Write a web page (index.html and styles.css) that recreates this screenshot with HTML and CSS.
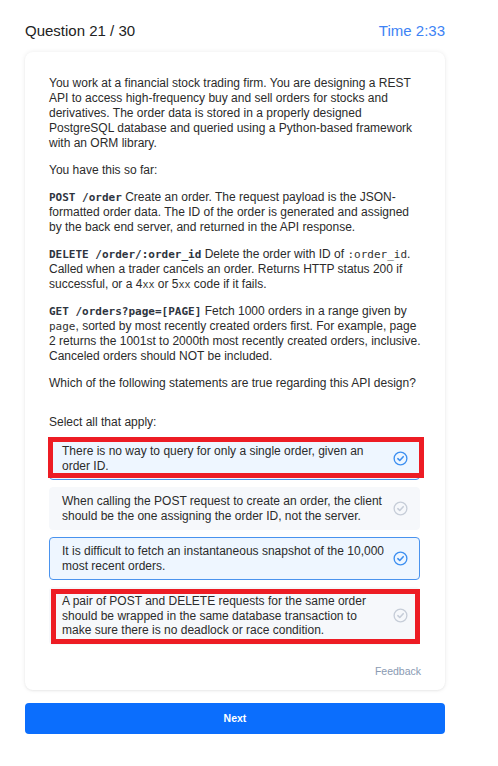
FILE: index.html
```html
<!DOCTYPE html>
<html>
<head>
<meta charset="utf-8">
<link rel="stylesheet" href="styles.css">
</head>
<body>
<div class="page">
  <header class="top">
    <span class="qnum">Question 21 / 30</span>
    <span class="timer">Time 2:33</span>
  </header>
  <section class="card">
    <div class="question">
      <p>You work at a financial stock trading firm. You are designing a REST API to access high-frequency buy and sell orders for stocks and derivatives. The order data is stored in a properly designed PostgreSQL database and queried using a Python-based framework with an ORM library.</p>
      <p>You have this so far:</p>
      <p><code class="ep">POST /order</code> Create an order. The request payload is the JSON-formatted order data. The ID of the order is generated and assigned by the back end server, and returned in the API response.</p>
      <p><code class="ep">DELETE /order/:order_id</code> Delete the order with ID of <code>:order_id</code>. Called when a trader cancels an order. Returns HTTP status 200 if successful, or a 4<code class="xx">xx</code> or 5<code class="xx">xx</code> code if it fails.</p>
      <p><code class="ep">GET /orders?page=[PAGE]</code> Fetch 1000 orders in a range given by <code>page</code>, sorted by most recently created orders first. For example, page 2 returns the 1001st to 2000th most recently created orders, inclusive. Canceled orders should NOT be included.</p>
      <p>Which of the following statements are true regarding this API design?</p>
    </div>
    <div class="select-label">Select all that apply:</div>
    <div class="options">
      <div class="option selected">
        <span class="opt-text">There is no way to query for only a single order, given an order ID.</span>
        <svg class="check" viewBox="0 0 16 16" width="15" height="15"><circle cx="8" cy="8" r="6.8" fill="none" stroke="currentColor" stroke-width="1.4"/><path d="M5.2 8.2 L7.2 10.1 L10.9 6.1" fill="none" stroke="currentColor" stroke-width="1.7" stroke-linecap="round" stroke-linejoin="round"/></svg>
        <span class="mark mark-a"></span>
      </div>
      <div class="option">
        <span class="opt-text">When calling the POST request to create an order, the client should be the one assigning the order ID, not the server.</span>
        <svg class="check" viewBox="0 0 16 16" width="15" height="15"><circle cx="8" cy="8" r="6.8" fill="none" stroke="currentColor" stroke-width="1.4"/><path d="M5.2 8.2 L7.2 10.1 L10.9 6.1" fill="none" stroke="currentColor" stroke-width="1.7" stroke-linecap="round" stroke-linejoin="round"/></svg>
      </div>
      <div class="option selected">
        <span class="opt-text">It is difficult to fetch an instantaneous snapshot of the 10,000 most recent orders.</span>
        <svg class="check" viewBox="0 0 16 16" width="15" height="15"><circle cx="8" cy="8" r="6.8" fill="none" stroke="currentColor" stroke-width="1.4"/><path d="M5.2 8.2 L7.2 10.1 L10.9 6.1" fill="none" stroke="currentColor" stroke-width="1.7" stroke-linecap="round" stroke-linejoin="round"/></svg>
      </div>
      <div class="option">
        <span class="opt-text">A pair of POST and DELETE requests for the same order should be wrapped in the same database transaction to make sure there is no deadlock or race condition.</span>
        <svg class="check" viewBox="0 0 16 16" width="15" height="15"><circle cx="8" cy="8" r="6.8" fill="none" stroke="currentColor" stroke-width="1.4"/><path d="M5.2 8.2 L7.2 10.1 L10.9 6.1" fill="none" stroke="currentColor" stroke-width="1.7" stroke-linecap="round" stroke-linejoin="round"/></svg>
        <span class="mark mark-b"></span>
      </div>
    </div>
    <div class="feedback">Feedback</div>
  </section>
  <button class="next">Next</button>
</div>
</body>
</html>
```
FILE: styles.css
```css
* { box-sizing: border-box; }
html, body { margin: 0; padding: 0; background: #fff; }
body {
  font-family: "Liberation Sans", Arial, sans-serif;
  color: #2b2b2b;
  width: 498px;
}
.page {
  padding: 22px 53px 0 25px;
}
.top {
  display: flex;
  justify-content: space-between;
  align-items: center;
  font-size: 15px;
  line-height: 18px;
  height: 18px;
  margin-bottom: 12px;
}
.qnum { color: #222; }
.timer { color: #3d83f5; }
.card {
  width: 420px;
  background: #fff;
  border-radius: 8px;
  box-shadow: 0 0 5px rgba(0, 0, 0, 0.08), 0 1px 2px rgba(0, 0, 0, 0.05);
  padding: 24px 24px 12px 24px;
  font-size: 12px;
  line-height: 15px;
}
.question p { margin: 0 0 12px 0; }
.question p:last-child { margin-bottom: 24px; }
code {
  font-family: "DejaVu Sans Mono", "Liberation Mono", monospace;
  font-size: 11px;
  line-height: 1;
  color: #333;
}
code.ep { font-weight: bold; color: #2e3440; }
code.xx { font-size: 10px; }
.select-label { margin-bottom: 7px; }
.options {
  display: flex;
  flex-direction: column;
  gap: 7px;
  width: 371px;
}
.option {
  position: relative;
  display: flex;
  align-items: center;
  gap: 8px;
  padding: 6px 11px 6px 12px;
  line-height: 14.5px;
  border: 1px solid #f6f8fb;
  background: #f6f8fb;
  border-radius: 4px;
  color: #2b2b2b;
}
.option.selected {
  background: #eef6ff;
  border-color: #4a93ee;
}
.opt-text { flex: 1; }
.check { flex: none; color: #c6cdd8; width: 15px; height: 15px; }
.option.selected .check { color: #3b8ef0; }
.mark {
  position: absolute;
  border: 5px solid #ed1c24;
  pointer-events: none;
}
.mark-a { left: -2px; right: -5px; top: -1px; bottom: 1px; }
.mark-b { left: 1px; right: -1px; top: 1px; bottom: 0; }
.feedback {
  text-align: right;
  width: 372px;
  font-size: 10.5px;
  line-height: 14px;
  color: #8a9ab2;
  margin-top: 19px;
}
.next {
  display: block;
  width: 420px;
  height: 31px;
  margin-top: 13px;
  border: none;
  border-radius: 4px;
  background: #0b6efd;
  color: #fff;
  font-family: "Liberation Sans", Arial, sans-serif;
  font-weight: bold;
  font-size: 10.5px;
}
```
